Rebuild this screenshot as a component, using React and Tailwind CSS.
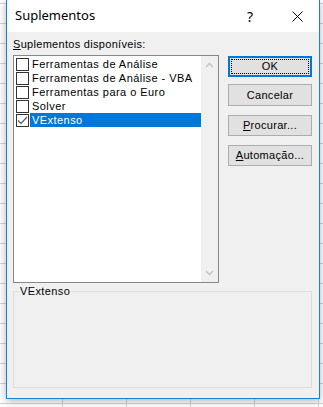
import React from "react";

const items = [
  { label: "Ferramentas de Análise", checked: false },
  { label: "Ferramentas de Análise - VBA", checked: false },
  { label: "Ferramentas para o Euro", checked: false },
  { label: "Solver", checked: false },
  { label: "VExtenso", checked: true, selected: true },
];

const font = { fontFamily: '"Liberation Sans", Arial, sans-serif' };

function Checkbox({ checked }) {
  return (
    <span className="w-[13px] h-[13px] border border-[#333333] bg-white flex items-center justify-center shrink-0">
      {checked && (
        <svg width="11" height="11" viewBox="0 0 11 11">
          <path d="M1 5.5 L4 8.5 L10 2" fill="none" stroke="#555555" strokeWidth="1.2" />
        </svg>
      )}
    </span>
  );
}

function Button({ children, focused, className = "" }) {
  if (focused) {
    return (
      <div className={`h-[21px] border-2 border-[#0078d7] bg-[#e1e1e1] p-[1px] ${className}`}>
        <div className="h-full border border-dotted border-black flex items-center justify-center text-[11px] tracking-[0.3px] text-black">
          {children}
        </div>
      </div>
    );
  }
  return (
    <div className={`h-[21px] border border-[#adadad] bg-[#e1e1e1] flex items-center justify-center text-[11px] tracking-[0.3px] text-black ${className}`}>
      {children}
    </div>
  );
}

export default function App() {
  return (
    <div
      className="w-[323px] h-[407px] overflow-hidden bg-white bg-[linear-gradient(to_right,#d4d4d4_1px,transparent_1px),linear-gradient(to_bottom,#d4d4d4_1px,transparent_1px)] bg-[size:64px_20px] bg-[position:62px_3px] pl-[6px]"
      style={font}
    >
      <div className="w-[314px] h-[399px] border-x border-b border-[#1a7fd6] bg-[#f0f0f0] flex flex-col shadow-[0_2px_8px_rgba(0,0,0,0.3)]">
        {/* title bar */}
        <div className="h-[32px] bg-white flex items-center shrink-0">
          <span
            className="ml-[8px] text-[13px] text-black"
            style={{ fontFamily: '"Noto Sans", "Open Sans", sans-serif' }}
          >
            Suplementos
          </span>
          <span
            className="ml-auto text-[14px] text-black w-[14px] text-center mr-[35px]"
            style={{ fontFamily: '"Noto Sans", sans-serif' }}
          >
            ?
          </span>
          <svg width="11" height="11" viewBox="0 0 11 11" className="mr-[16px]">
            <path d="M0.5 0.5 L10.5 10.5 M10.5 0.5 L0.5 10.5" stroke="#000" strokeWidth="1" />
          </svg>
        </div>

        {/* body */}
        <div className="flex-1 px-[6px] pt-[6px]">
          <div className="flex">
            <div className="w-[206px]">
              <div className="h-[13px] leading-[13px] text-[11px] tracking-[0.3px] text-black mb-[4px]">
                <span className="underline">S</span>uplementos disponíveis:
              </div>
              <div className="h-[228px] border border-[#828790] bg-white flex">
                <div className="flex-1 pt-[1px] pl-[2px]">
                  {items.map((it) => (
                    <div key={it.label} className="h-[14px] flex items-center">
                      <Checkbox checked={it.checked} />
                      <span
                        className={`ml-[1px] h-[14px] leading-[14px] pl-[2px] text-[11px] tracking-[0.45px] flex-1 ${
                          it.selected ? "bg-[#0078d7] text-white" : "text-black"
                        }`}
                      >
                        {it.label}
                      </span>
                    </div>
                  ))}
                </div>
                <div className="w-[17px] bg-[#f0f0f0] flex flex-col items-center justify-between py-[6px]">
                  <svg width="9" height="6" viewBox="0 0 9 6">
                    <path d="M1 5 L4.5 1.5 L8 5" fill="none" stroke="#c2c2c2" strokeWidth="1.4" />
                  </svg>
                  <svg width="9" height="6" viewBox="0 0 9 6">
                    <path d="M1 1 L4.5 4.5 L8 1" fill="none" stroke="#c2c2c2" strokeWidth="1.4" />
                  </svg>
                </div>
              </div>
            </div>

            <div className="w-[84px] ml-[9px] pt-[18px] flex flex-col">
              <Button focused>OK</Button>
              <Button className="mt-[7px] h-[22px]">Cancelar</Button>
              <Button className="mt-[9px]">
                <span>
                  <span className="underline">P</span>rocurar...
                </span>
              </Button>
              <Button className="mt-[9px]">
                <span>
                  <span className="underline">A</span>utomação...
                </span>
              </Button>
            </div>
          </div>

          {/* group box */}
          <div className="relative mt-[8px] w-[299px] h-[97px] border border-[#dcdcdc]">
            <span className="absolute -top-[7px] left-[5px] px-[1px] bg-[#f0f0f0] text-[11px] tracking-[0.4px] leading-[13px] text-black">
              VExtenso
            </span>
          </div>
        </div>
      </div>
    </div>
  );
}
